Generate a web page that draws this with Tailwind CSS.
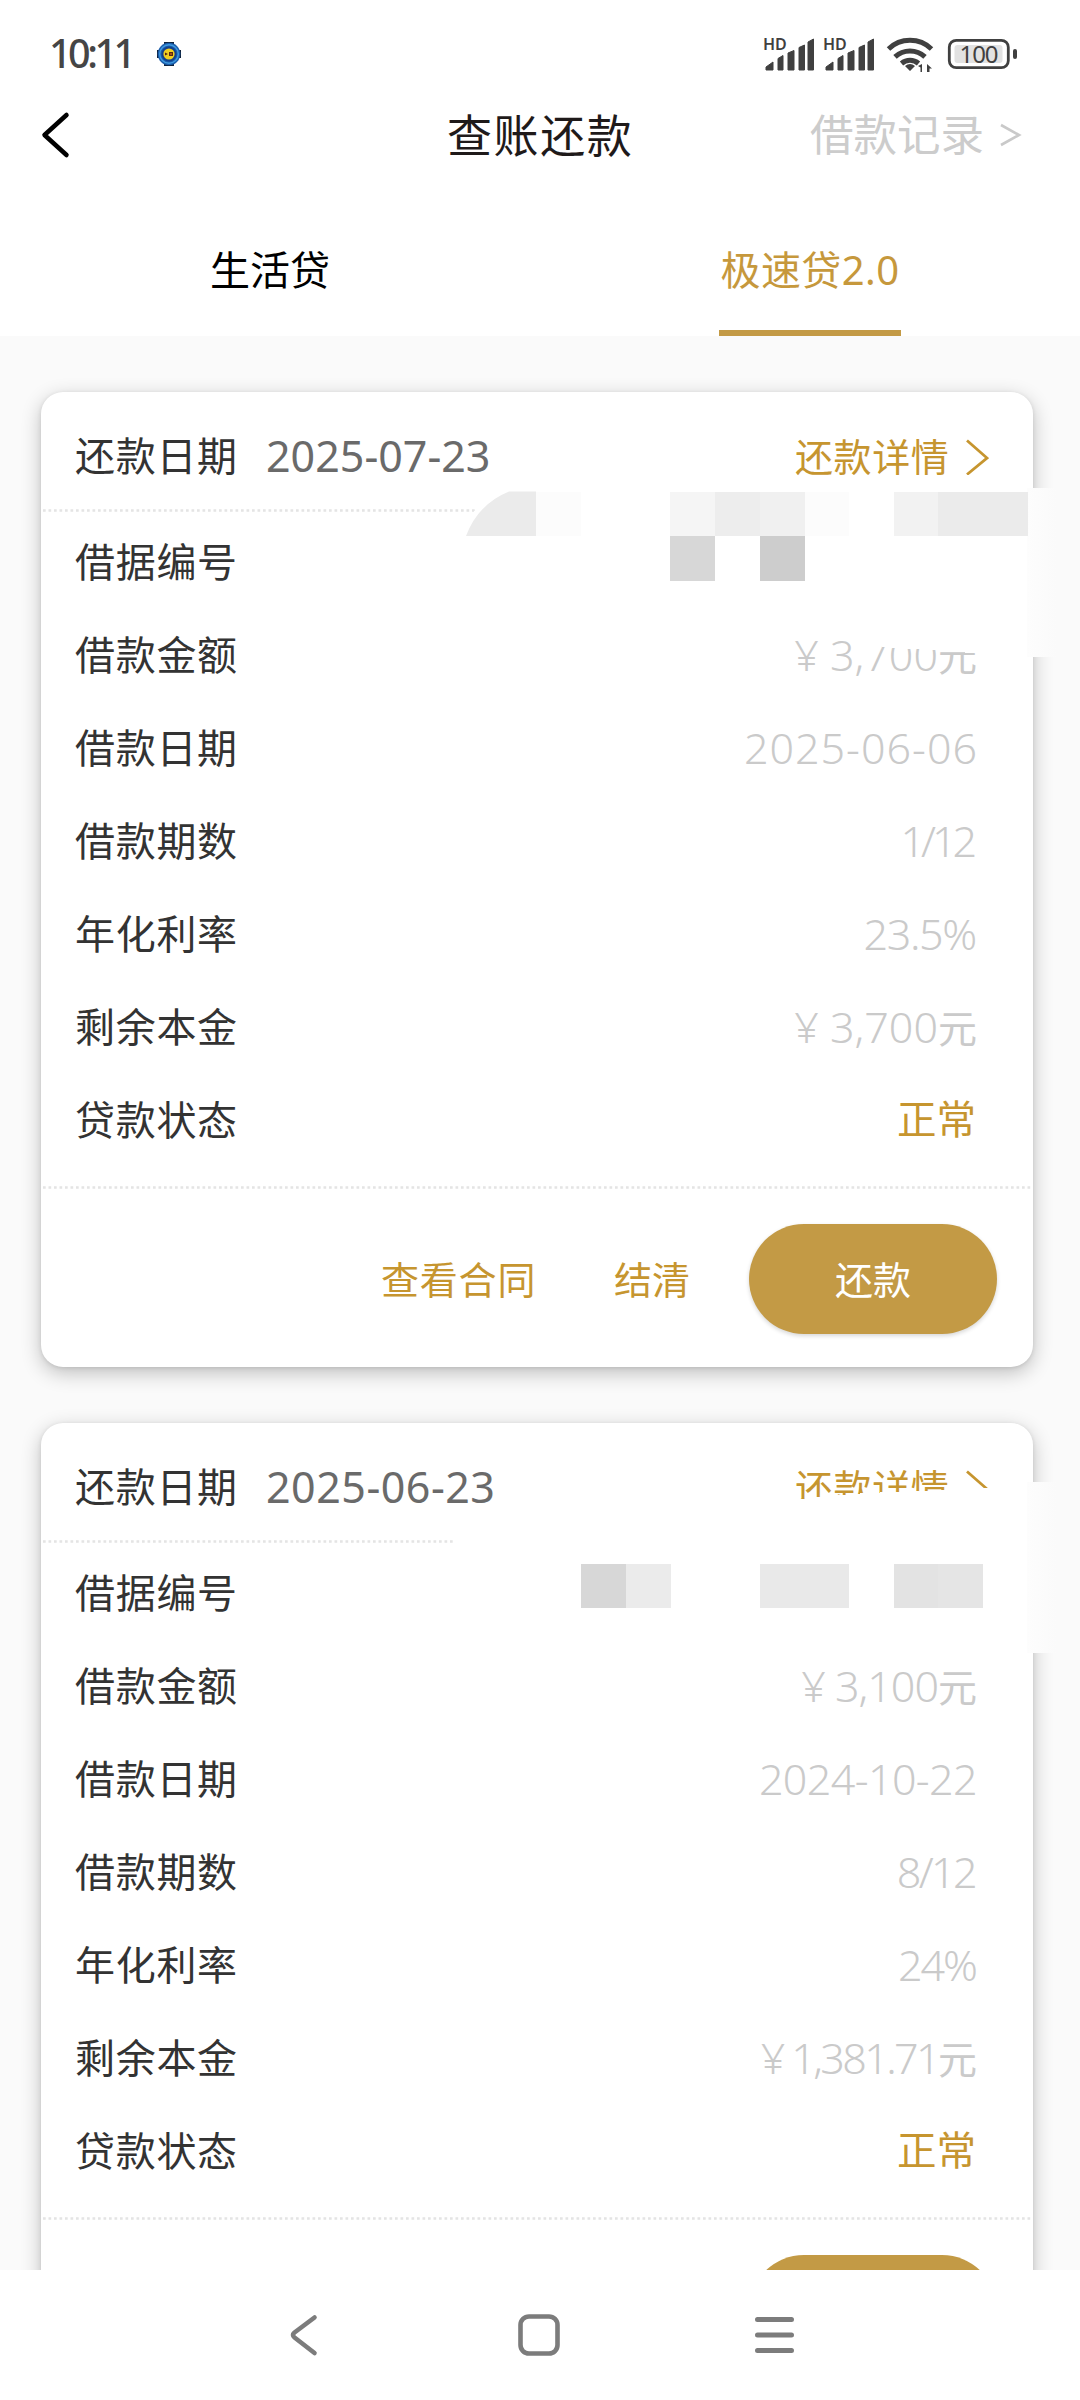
<!DOCTYPE html>
<html lang="zh-CN">
<head>
<meta charset="utf-8">
<title>查账还款</title>
<script src="https://cdn.jsdelivr.net/npm/@tailwindcss/browser@4"></script>
</head>
<body class="bg-white">
<div class="relative flex h-[2400px] w-[1080px] flex-col overflow-hidden bg-white font-['Noto_Sans','Noto_Sans_CJK_SC',sans-serif] whitespace-nowrap">

  <!-- status bar -->
  <header class="flex h-[108px] shrink-0 items-center pl-[49px] text-[#454545]">
    <span class="w-[83px] text-[39.500px] leading-none font-medium tracking-[-3.500px]">10:11</span>
    <svg class="ml-[24px]" width="26" height="26" viewBox="0 0 26 26">
      <path d="M8 1h10v4H8zM8 21h10v4H8zM1 9h4v8H1zM21 9h4v8h-4z" fill="#10233b"/>
      <circle cx="13" cy="13" r="11.300" fill="#1a5cab"/><circle cx="13" cy="13" r="9.300" fill="none" stroke="#3f9be0" stroke-width="1.400"/>
      <circle cx="13" cy="13" r="7.500" fill="#12408c"/><circle cx="13" cy="13" r="5.600" fill="#f0cf1f"/>
      <path d="M9 11.500l3 1.500-3 1.500zM13 11h4v4h-4z" fill="#5a2a10"/><path d="M14.300 12.300h1.400v1.400h-1.400z" fill="#e9701c"/>
    </svg>
    <svg class="ml-[580px]" width="260" height="44" viewBox="762 32 260 44" fill="#404040">
      <g id="sig">
        <path d="M766 70v-3l7-5v8zM778 70V58.500l5-3V70zM788 70V53l6-2.500V70zM799 70V47.500l5.500-2.500V70zM808 70V42l5.500-3V70z" stroke="#404040" stroke-linejoin="round"/>
        <text x="763" y="50" font-family="Noto Sans" font-size="16" font-weight="600">HD</text>
      </g>
      <use href="#sig" x="60"/>
      <g fill="none" stroke="#404040" stroke-width="5">
        <path d="M888.500 49a31 31 0 0 1 43 0"/><path d="M895 56.800a22 22 0 0 1 30 0"/><path d="M901.500 63.500a13 13 0 0 1 17 0"/>
      </g>
      <path d="M905 66q5-4 10 0l-5 5zM918 66l4-2v8h-1.500v-4.500zM927 72v-8l5 4.500h-2.500V72z"/>
      <rect x="949.300" y="40.300" width="59" height="27.400" rx="7" fill="#fff" stroke="#404040" stroke-width="2.800"/>
      <rect x="954.500" y="45" width="48" height="18" rx="3" fill="#e2e2e2"/>
      <rect x="1013" y="49" width="4" height="10" rx="2"/>
      <text x="979" y="62.500" text-anchor="middle" font-family="Noto Sans" font-size="24" textLength="39">100</text>
    </svg>
  </header>

  <!-- title bar -->
  <div class="flex h-[54px] shrink-0 items-center">
    <svg class="ml-[40px]" width="32" height="48" viewBox="0 0 32 48" fill="none" stroke="#000" stroke-width="4.500" stroke-linecap="round" stroke-linejoin="round"><path d="M26.500 4L4.500 24l22 20"/></svg>
    <h1 class="ml-[375px] w-[191px] text-[45px] leading-none tracking-[1.600px] text-[#1f1a1a]">查账还款</h1>
    <a class="ml-[172px] flex items-center text-[43.500px] leading-none text-[#cccccc]">借款记录
      <svg class="ml-[16px]" width="22" height="26" viewBox="0 0 22 26" fill="none" stroke="#c9c9c9" stroke-width="2.600"><path d="M1 3l18 10L1 23"/></svg>
    </a>
  </div>

  <!-- tabs -->
  <nav class="flex h-[174px] shrink-0 text-[40px] leading-none">
    <div class="flex w-[540px] items-center justify-center pt-[42px] text-black">生活贷</div>
    <div class="flex w-[540px] justify-center">
      <div class="flex w-[182px] items-center justify-center border-b-[6px] border-[#c39a45] pt-[48px] tracking-[0.400px] text-[#c6983c]">极速贷2.0</div>
    </div>
  </nav>

  <main class="flex h-[1934px] shrink-0 flex-col gap-[56px] overflow-hidden bg-[#fafafa] pt-[56px] pl-[41px]">

    <section class="relative h-[975px] w-[992px] shrink-0 rounded-[22px] bg-white shadow-[0_6px_20px_rgba(0,0,0,0.24),0_1px_4px_rgba(0,0,0,0.10)]">
      <div class="flex h-[117px] items-center pt-[10px] pl-[34px]">
        <span class="w-[191px] text-[40px] leading-none tracking-[0.700px] text-[#333]">还款日期</span>
        <span class="w-[529px] text-[43px] leading-none text-[#6a6a6a]">2025-07-23</span>
        <a class="flex items-center text-[38px] leading-none tracking-[0.600px] text-[#c6952f]">还款详情
          <svg class="ml-[16px]" width="24" height="38" viewBox="0 0 24 38" fill="none" stroke="#c6952f" stroke-width="2.800"><path d="M2 3.500L22 21 2 37.500"/></svg>
        </a>
      </div>
      <svg class="block" width="992" height="3"><path d="M2 1.500H990" stroke="#e4e4e4" stroke-width="2.600" stroke-dasharray="2.700 2.800"/></svg>
      <dl class="flex h-[674px] flex-col pt-[3px] pr-[56px] pl-[34px] text-[40px] leading-none text-[#333]">
        <div class="flex h-[93px] items-center justify-between"><dt class="tracking-[0.700px]">借据编号</dt><dd></dd></div>
        <div class="flex h-[93px] items-center justify-between"><dt class="tracking-[0.700px]">借款金额</dt><dd class="text-[43px] font-[350] text-[#cacaca]">¥ 3,700<span class="text-[39px] font-normal">元</span></dd></div>
        <div class="flex h-[93px] items-center justify-between"><dt class="tracking-[0.700px]">借款日期</dt><dd class="mr-[-1px] text-[43px] font-[350] tracking-[1px] text-[#cacaca]">2025-06-06</dd></div>
        <div class="flex h-[93px] items-center justify-between"><dt class="tracking-[0.700px]">借款期数</dt><dd class="mr-[4px] text-[43px] font-[350] tracking-[-4px] text-[#cacaca]">1/12</dd></div>
        <div class="flex h-[93px] items-center justify-between"><dt class="tracking-[0.700px]">年化利率</dt><dd class="mr-[1px] text-[43px] font-[350] tracking-[-1.300px] text-[#cacaca]">23.5%</dd></div>
        <div class="flex h-[93px] items-center justify-between"><dt class="tracking-[0.700px]">剩余本金</dt><dd class="text-[43px] font-[350] text-[#cacaca]">¥ 3,700<span class="text-[39px] font-normal">元</span></dd></div>
        <div class="flex h-[93px] items-center justify-between"><dt class="tracking-[0.700px]">贷款状态</dt><dd class="mr-px text-[39.500px] text-[#c6952f]">正常</dd></div>
      </dl>
      <svg class="block" width="992" height="3"><path d="M2 1.500H990" stroke="#e4e4e4" stroke-width="2.600" stroke-dasharray="2.700 2.800"/></svg>
      <div class="flex h-[178px] items-center justify-end pt-[2px] pr-[36px] text-[38px] leading-none text-[#c6952f]">
        <a class="w-[233px] tracking-[0.800px]">查看合同</a>
        <a class="w-[135px]">结清</a>
        <button class="flex h-[110px] w-[248px] items-center justify-center rounded-full bg-[#c39a45] text-white shadow-[0_2px_4px_rgba(0,0,0,0.16)]">还款</button>
      </div>
      <!-- redacted area -->
      <svg class="absolute top-[90px] left-[409px]" width="620" height="180" viewBox="450 482 620 180" shape-rendering="crispEdges">
        <defs><linearGradient id="fade"><stop stop-color="#fdfdfd"/><stop offset="1" stop-color="#fafafa"/></linearGradient></defs>
        <path d="M457 536Q468 505 512 491H1028V600H457z" fill="#fff"/>
        <path d="M830 625V635L852 642 872 645 892 648 930 650 955 652 995 654V620z" fill="#fff"/>
        <path d="M1027 488H1056V657H1027z" fill="url(#fade)"/>
        <path d="M466 536Q478 504 509 491.500H536V536z" fill="#ebebeb" shape-rendering="auto"/>
        <path d="M536 491.500h45v44.500h-45zM804 491.500h45v44.500h-45z" fill="#fcfcfc"/>
        <path d="M670 491.500h45v44.500h-45z" fill="#f5f5f5"/>
        <path d="M715 491.500h45v44.500h-45z" fill="#ededed"/>
        <path d="M760 491.500h44.500v44.500H760z" fill="#f0f0f0"/>
        <path d="M894 491.500h45v44.500h-45z" fill="#f2f2f2"/>
        <path d="M938 491.500h90v44.500h-90z" fill="#ebebeb"/>
        <path d="M670 536h45v45h-45z" fill="#d7d7d7"/>
        <path d="M760 536h44.500v45H760z" fill="#cdcdcd"/>
      </svg>
    </section>

    <section class="relative h-[975px] w-[992px] shrink-0 rounded-[22px] bg-white shadow-[0_6px_20px_rgba(0,0,0,0.24),0_1px_4px_rgba(0,0,0,0.10)]">
      <div class="flex h-[117px] items-center pt-[10px] pl-[34px]">
        <span class="w-[191px] text-[40px] leading-none tracking-[0.700px] text-[#333]">还款日期</span>
        <span class="w-[529px] text-[43px] leading-none tracking-[0.500px] text-[#6a6a6a]">2025-06-23</span>
        <a class="flex items-center text-[38px] leading-none tracking-[0.600px] text-[#c6952f]">还款详情
          <svg class="ml-[16px]" width="24" height="38" viewBox="0 0 24 38" fill="none" stroke="#c6952f" stroke-width="2.800"><path d="M2 3.500L22 21 2 37.500"/></svg>
        </a>
      </div>
      <svg class="block" width="992" height="3"><path d="M2 1.500H414" stroke="#e4e4e4" stroke-width="2.600" stroke-dasharray="2.700 2.800"/></svg>
      <dl class="flex h-[674px] flex-col pt-[3px] pr-[56px] pl-[34px] text-[40px] leading-none text-[#333]">
        <div class="flex h-[93px] items-center justify-between"><dt class="tracking-[0.700px]">借据编号</dt><dd></dd></div>
        <div class="flex h-[93px] items-center justify-between"><dt class="tracking-[0.700px]">借款金额</dt><dd class="text-[43px] font-[350] tracking-[-1px] text-[#cacaca]">¥ 3,100<span class="text-[39px] font-normal tracking-normal">元</span></dd></div>
        <div class="flex h-[93px] items-center justify-between"><dt class="tracking-[0.700px]">借款日期</dt><dd class="text-[43px] font-[350] tracking-[-0.600px] text-[#cacaca]">2024-10-22</dd></div>
        <div class="flex h-[93px] items-center justify-between"><dt class="tracking-[0.700px]">借款期数</dt><dd class="mr-[2px] text-[43px] font-[350] tracking-[-2.600px] text-[#cacaca]">8/12</dd></div>
        <div class="flex h-[93px] items-center justify-between"><dt class="tracking-[0.700px]">年化利率</dt><dd class="mr-px text-[43px] font-[350] tracking-[-2px] text-[#cacaca]">24%</dd></div>
        <div class="flex h-[93px] items-center justify-between"><dt class="tracking-[0.700px]">剩余本金</dt><dd class="text-[43px] font-[350] tracking-[-2.600px] text-[#cacaca]">¥ 1,381.71<span class="text-[39px] font-normal tracking-normal">元</span></dd></div>
        <div class="flex h-[93px] items-center justify-between"><dt class="tracking-[0.700px]">贷款状态</dt><dd class="mr-px text-[39.500px] text-[#c6952f]">正常</dd></div>
      </dl>
      <svg class="block" width="992" height="3"><path d="M2 1.500H990" stroke="#e4e4e4" stroke-width="2.600" stroke-dasharray="2.700 2.800"/></svg>
      <div class="flex h-[178px] items-center justify-end pt-[2px] pr-[36px]">
        <div class="h-[110px] w-[248px] rounded-full bg-[#c39a45]"></div>
      </div>
      <!-- redacted area -->
      <svg class="absolute top-[52px] left-[509px]" width="520" height="190" viewBox="550 1475 520 190" shape-rendering="crispEdges">
        <path d="M780 1503L800 1499 830 1496 860 1493.500 890 1492 950 1490 970 1488H1027V1530H780z" fill="#fff"/>
        <path d="M1027 1482H1056V1653H1027z" fill="url(#fade)"/>
        <path d="M581 1563.500h45V1608h-45z" fill="#d7d7d7"/>
        <path d="M626 1563.500h44.500V1608H626z" fill="#ebebeb"/>
        <path d="M760 1563.500h89V1608h-89z" fill="#e9e9e9"/>
        <path d="M894 1563.500h45V1608h-45z" fill="#e3e3e3"/>
        <path d="M938 1563.500h45V1608h-45z" fill="#e5e5e5"/>
      </svg>
    </section>
  </main>

  <!-- system navigation -->
  <footer class="relative flex h-[130px] shrink-0 items-center bg-white">
    <svg class="ml-[286px]" width="512" height="50" viewBox="286 2310 512 50" fill="none" stroke="#7c7c7c" stroke-width="4.600" stroke-linecap="round" stroke-linejoin="round">
      <path d="M314.500 2317.500L294.500 2332.500Q291.500 2335 294.500 2337.500L314.500 2353"/>
      <rect x="520.500" y="2316.500" width="37" height="37" rx="8.500"/>
      <path d="M757.500 2319.500h34M757.500 2335h34M757.500 2350.500h34" stroke-width="5"/>
    </svg>
  </footer>
</div>
</body>
</html>
